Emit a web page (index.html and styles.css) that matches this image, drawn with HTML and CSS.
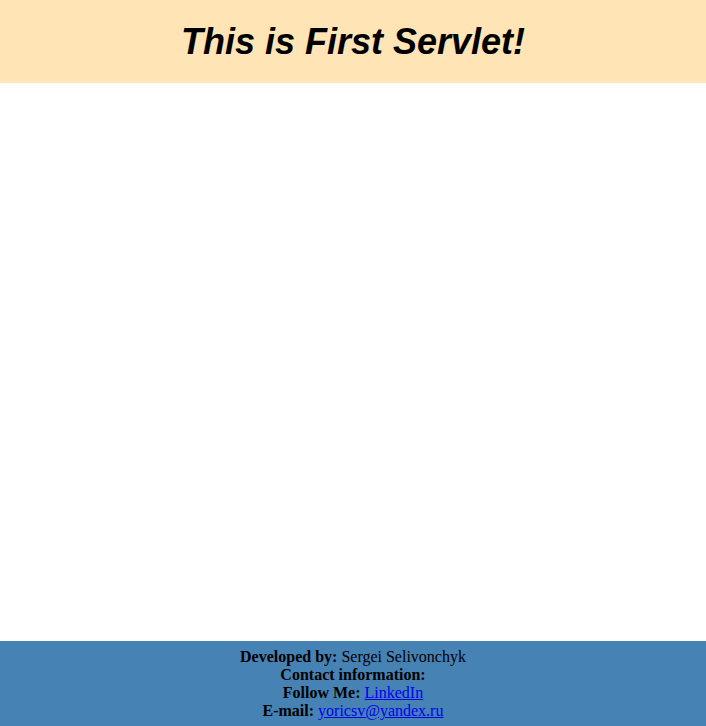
FILE: index.html
```html
<!DOCTYPE html>
<html>
<head>
<meta charset="utf-8">
<link rel="stylesheet" href="styles.css">
</head>
<body>
<div class="page">
  <header class="header"><h1 class="title">This is First Servlet!</h1></header>
  <main class="content"></main>
  <footer class="footer">
    <div><b>Developed by:</b> Sergei Selivonchyk</div>
    <div><b>Contact information:</b></div>
    <div><b>Follow Me:</b> <a href="#">LinkedIn</a></div>
    <div><b>E-mail:</b> <a href="#">yoricsv@yandex.ru</a></div>
  </footer>
</div>
</body>
</html>
```
FILE: styles.css
```css
html, body { margin: 0; padding: 0; }
body { font-family: "Liberation Serif", "Times New Roman", serif; font-size: 16px; }
.page { display: flex; flex-direction: column; min-height: 100vh; }
.header { background: #ffe4b5; height: 83px; display: flex; align-items: center; justify-content: center; }
.title { margin: 0; font-family: "Liberation Sans", Arial, sans-serif; font-size: 36px; font-weight: bold; font-style: italic; color: #000; }
.content { flex: 1; }
.footer { background: #4682b4; text-align: center; padding: 7px 0 6px; line-height: 18px; color: #000; }
.footer a { color: #0000ee; }
```
